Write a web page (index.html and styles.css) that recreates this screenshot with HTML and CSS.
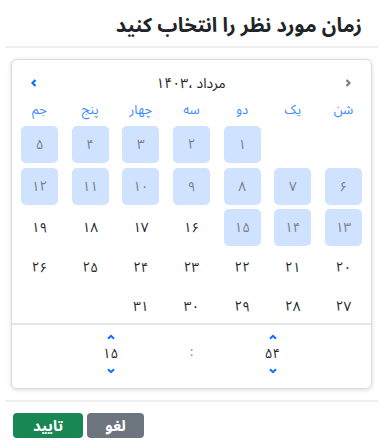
FILE: index.html
```html
<!DOCTYPE html>
<html lang="fa" dir="rtl">
<head>
<meta charset="utf-8">
<link rel="stylesheet" href="styles.css">
</head>
<body>
<div class="modal">
  <div class="modal-header">
    <h5 class="modal-title">زمان مورد نظر را انتخاب کنید</h5>
  </div>
  <div class="modal-body">
    <div class="picker">
      <div class="cal-head">
        <span class="nav prev"><svg width="8" height="10" viewBox="0 0 8 10"><path d="M2.5 2 L5.5 5 L2.5 8" fill="none" stroke="currentColor" stroke-width="2.2"/></svg></span>
        <span class="month">مرداد ،۱۴۰۳</span>
        <span class="nav next"><svg width="8" height="10" viewBox="0 0 8 10"><path d="M5.5 2 L2.5 5 L5.5 8" fill="none" stroke="currentColor" stroke-width="2.2"/></svg></span>
      </div>
      <div class="weekdays">
        <span>شن</span><span>یک</span><span>دو</span><span>سه</span><span>چهار</span><span>پنج</span><span>جم</span>
      </div>
      <div class="days">
        <span class="empty"></span><span class="empty"></span>
        <span class="day off">۱</span><span class="day off">۲</span><span class="day off">۳</span><span class="day off">۴</span><span class="day off">۵</span>
        <span class="day off">۶</span><span class="day off">۷</span><span class="day off">۸</span><span class="day off">۹</span><span class="day off">۱۰</span><span class="day off">۱۱</span><span class="day off">۱۲</span>
        <span class="day off">۱۳</span><span class="day off">۱۴</span><span class="day off">۱۵</span><span class="day">۱۶</span><span class="day">۱۷</span><span class="day">۱۸</span><span class="day">۱۹</span>
        <span class="day">۲۰</span><span class="day">۲۱</span><span class="day">۲۲</span><span class="day">۲۳</span><span class="day">۲۴</span><span class="day">۲۵</span><span class="day">۲۶</span>
        <span class="day">۲۷</span><span class="day">۲۸</span><span class="day">۲۹</span><span class="day">۳۰</span><span class="day">۳۱</span><span class="empty"></span><span class="empty"></span>
      </div>
      <div class="time">
        <div class="tcol">
          <span class="arrow"><svg width="10" height="6" viewBox="0 0 10 6"><path d="M2 4.8 L5 1.8 L8 4.8" fill="none" stroke="currentColor" stroke-width="2"/></svg></span>
          <span class="tval">۵۴</span>
          <span class="arrow"><svg width="10" height="6" viewBox="0 0 10 6"><path d="M2 1.2 L5 4.2 L8 1.2" fill="none" stroke="currentColor" stroke-width="2"/></svg></span>
        </div>
        <div class="tcol sep"><span class="colon">:</span></div>
        <div class="tcol">
          <span class="arrow"><svg width="10" height="6" viewBox="0 0 10 6"><path d="M2 4.8 L5 1.8 L8 4.8" fill="none" stroke="currentColor" stroke-width="2"/></svg></span>
          <span class="tval">۱۵</span>
          <span class="arrow"><svg width="10" height="6" viewBox="0 0 10 6"><path d="M2 1.2 L5 4.2 L8 1.2" fill="none" stroke="currentColor" stroke-width="2"/></svg></span>
        </div>
      </div>
    </div>
  </div>
  <div class="modal-footer">
    <button class="btn btn-gray">لغو</button>
    <button class="btn btn-green">تایید</button>
  </div>
</div>
</body>
</html>
```
FILE: styles.css
```css
html, body {
  margin: 0;
  padding: 0;
  background: #fff;
}
body {
  font-family: "Noto Sans Arabic", "Noto Naskh Arabic", "DejaVu Sans", sans-serif;
  color: #212529;
}
.modal {
  width: 373px;
  margin: 0 10px 0 5px;
}
.modal-header {
  height: 48px;
  border-bottom: 2px solid #eceef0;
  box-sizing: border-box;
  display: flex;
  align-items: center;
  padding: 5px 16px 0;
}
.modal-title {
  margin: 0;
  font-size: 20px;
  font-weight: bold;
  line-height: 1.5;
  color: #212529;
}
.modal-body {
  padding: 11px 6px 10px;
}
.picker {
  border: 1px solid #d7dce3;
  border-radius: 6px;
  box-shadow: 0 1px 4px rgba(0, 0, 0, 0.15);
  padding: 0 2px;
  height: 330px;
  box-sizing: border-box;
}
.cal-head {
  display: flex;
  align-items: center;
  justify-content: space-between;
  height: 36px;
  padding: 10px 17px 0 16px;
  box-sizing: border-box;
}
.month {
  font-size: 14px;
}
.nav {
  display: flex;
  width: 8px;
}
.nav.prev { color: #7a7f85; }
.nav.next { color: #0d6efd; }
.weekdays {
  display: grid;
  grid-template-columns: repeat(7, 50.67px);
  justify-content: center;
  height: 30px;
  padding-bottom: 5px;
  box-sizing: border-box;
  align-items: center;
  font-size: 13px;
  color: #3d8bfd;
  text-align: center;
}
.days {
  display: grid;
  grid-template-columns: repeat(7, 50.67px);
  grid-template-rows: 37px 37px 37px 34px 34px;
  row-gap: 4.5px;
  justify-content: center;
  justify-items: center;
  height: 197px;
}
.day {
  width: 37px;
  height: 100%;
  display: flex;
  align-items: center;
  justify-content: center;
  font-size: 13.5px;
  border-radius: 5px;
  color: #212529;
}
.day.off {
  background: #cfe2ff;
  color: #7b8085;
}
.time {
  border-top: 2px solid #e3e6ea;
  margin: 0 -2px;
  display: flex;
  justify-content: center;
  padding-top: 8px;
}
.tcol {
  width: 81px;
  display: flex;
  flex-direction: column;
  align-items: center;
}
.arrow {
  color: #0d6efd;
  display: flex;
  height: 8px;
  align-items: center;
}
.tval {
  font-size: 13.5px;
  line-height: 26px;
}
.sep {
  justify-content: center;
  height: 38px;
}
.colon {
  color: #7b8085;
  font-size: 12px;
}
.modal-footer {
  border-top: 2px solid #eceef0;
  margin-top: 1px;
  display: flex;
  justify-content: flex-end;
  gap: 4px;
  padding: 11px 8px 0;
}
.btn {
  font-family: inherit;
  font-size: 15px;
  font-weight: bold;
  color: #fff;
  border: none;
  border-radius: 4px;
  height: 25px;
  padding: 0;
  display: flex;
  align-items: center;
  justify-content: center;
}
.btn-gray {
  background: #6c757d;
  width: 57px;
}
.btn-green {
  background: #198754;
  width: 70px;
}
```
